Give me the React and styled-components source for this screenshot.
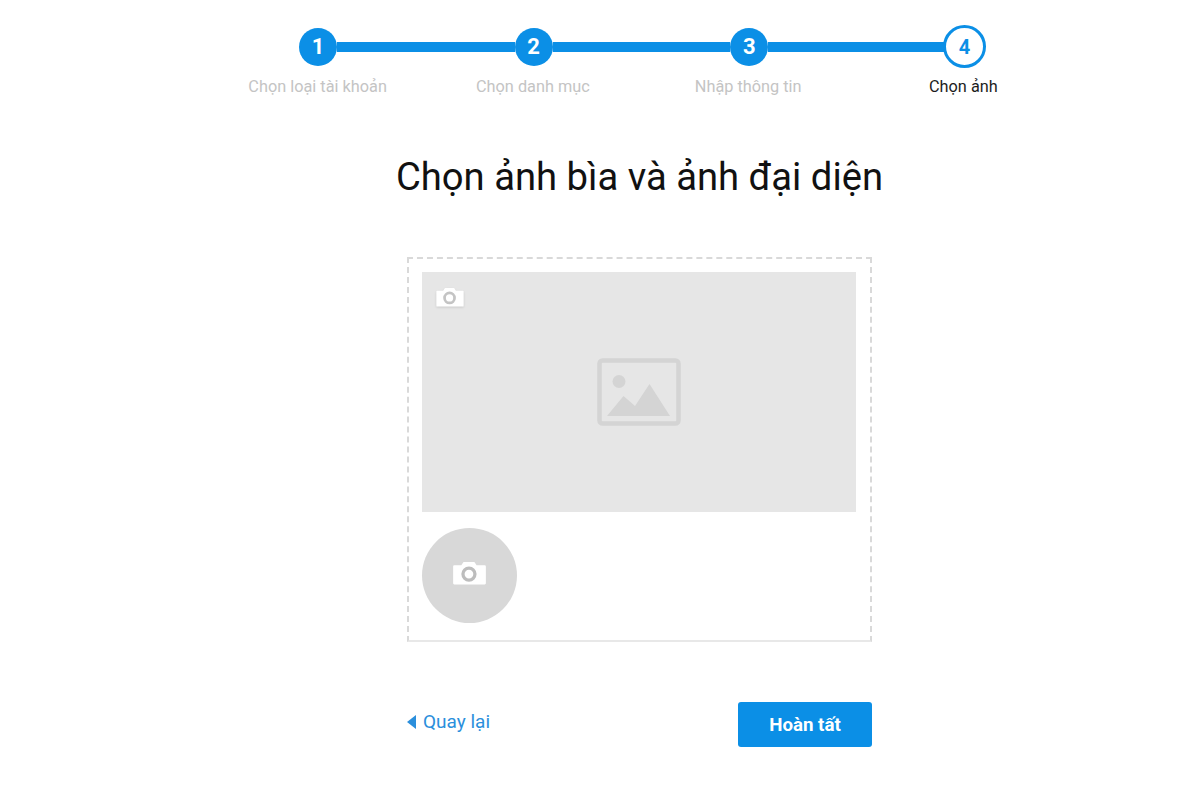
import React from 'react';
import styled, { createGlobalStyle } from 'styled-components';

const GlobalStyle = createGlobalStyle`
  html, body {
    margin: 0;
    padding: 0;
    background: #fff;
    font-family: Roboto, "Liberation Sans", sans-serif;
  }
`;

const steps = [
  { label: 'Chọn loại tài khoản' },
  { label: 'Chọn danh mục' },
  { label: 'Nhập thông tin' },
  { label: 'Chọn ảnh', current: true },
];

const CameraIcon = ({ width, height, lens }) => (
  <svg width={width} height={height} viewBox="0 0 30 22">
    <path
      d="M1 4h6.500L9.500 1h10l2 3H29a1 1 0 0 1 1 1V20.500a1 1 0 0 1-1 1H1a1 1 0 0 1-1-1V5a1 1 0 0 1 1-1z"
      fill="#fff"
    />
    <circle cx="14.500" cy="12" r="5.500" fill="none" stroke={lens} strokeWidth="3" />
  </svg>
);

const PictureIcon = () => (
  <svg width="84" height="68" viewBox="0 0 84 68">
    <rect x="2.500" y="2.500" width="79" height="63" rx="3" fill="none" stroke="#d4d4d4" strokeWidth="4.500" />
    <circle cx="22" cy="23.500" r="6.500" fill="#d4d4d4" />
    <path d="M10 58 L26.500 38 L38 48 L52.500 26 L73 58 Z" fill="#d4d4d4" />
  </svg>
);

export default function App() {
  return (
    <Page>
      <GlobalStyle />
      <Stepper>
        <Track>
          {steps.map((step, i) => (
            <React.Fragment key={step.label}>
              {step.current ? <CurrentDot>{i + 1}</CurrentDot> : <Dot>{i + 1}</Dot>}
              {i < steps.length - 1 && <Line />}
            </React.Fragment>
          ))}
        </Track>
        <Labels>
          {steps.map((step) => (
            <Label key={step.label} $current={step.current}>
              {step.label}
            </Label>
          ))}
        </Labels>
      </Stepper>

      <Main>
        <Title>Chọn ảnh bìa và ảnh đại diện</Title>

        <UploadCard>
          <Cover>
            <CoverCamera>
              <CameraIcon width={28} height={20} lens="#c4c4c4" />
            </CoverCamera>
            <PictureIcon />
          </Cover>
          <AvatarRow>
            <Avatar>
              <CameraIcon width={33} height={24} lens="#bdbdbd" />
            </Avatar>
          </AvatarRow>
        </UploadCard>

        <Actions>
          <BackLink href="#">
            <BackArrow />
            Quay lại
          </BackLink>
          <DoneButton type="button">Hoàn tất</DoneButton>
        </Actions>
      </Main>
    </Page>
  );
}

const Page = styled.div`
  box-sizing: border-box;
  width: 1200px;
  height: 800px;
  padding: 25px 0 0 81px;
  display: flex;
  flex-direction: column;
  align-items: center;
  overflow: hidden;
`;

const Stepper = styled.div`
  width: 861px;
  display: flex;
  flex-direction: column;
`;

const Track = styled.div`
  display: flex;
  align-items: center;
  margin: 0 85px 0 89px;
  height: 43px;
`;

const Dot = styled.div`
  flex: none;
  position: relative;
  width: 38px;
  height: 38px;
  border-radius: 50%;
  background: #0b8fe6;
  color: #fff;
  font-size: 22px;
  font-weight: 700;
  display: flex;
  align-items: center;
  justify-content: center;
`;

const CurrentDot = styled(Dot)`
  box-sizing: border-box;
  width: 43px;
  height: 43px;
  margin-left: -3px;
  background: #fff;
  border: 3px solid #0b8fe6;
  color: #0b8fe6;
  font-size: 20px;
`;

const Line = styled.div`
  flex: 1;
  height: 10px;
  background: #0b8fe6;
`;

const Labels = styled.div`
  display: grid;
  grid-template-columns: repeat(4, 1fr);
  margin-top: 9px;
`;

const Label = styled.div`
  text-align: center;
  font-size: 16.300px;
  line-height: 20px;
  color: ${({ $current }) => ($current ? '#1c1c1c' : '#c4c4c4')};
`;

const Main = styled.div`
  margin-right: 2px;
  display: flex;
  flex-direction: column;
  align-items: center;
`;

const Title = styled.h1`
  margin: 58px 0 0;
  font-size: 38.200px;
  line-height: 44px;
  font-weight: 400;
  color: #111;
`;

const UploadCard = styled.div`
  box-sizing: border-box;
  width: 465px;
  height: 385px;
  margin-top: 58px;
  padding: 13px 14px 0 13px;
  border: 2px dashed #d9d9d9;
  border-bottom: 2px solid #e8e8e8;
  display: flex;
  flex-direction: column;
`;

const Cover = styled.div`
  position: relative;
  height: 240px;
  background: #e6e6e6;
  display: flex;
  align-items: center;
  justify-content: center;
`;

const CoverCamera = styled.div`
  position: absolute;
  top: 15px;
  left: 14px;
  display: flex;
  filter: drop-shadow(0 1px 1px rgba(0, 0, 0, 0.12));
`;

const AvatarRow = styled.div`
  margin-top: 16px;
  display: flex;
`;

const Avatar = styled.div`
  box-sizing: border-box;
  width: 95px;
  height: 95px;
  padding-bottom: 6px;
  border-radius: 50%;
  background: #d8d8d8;
  display: flex;
  align-items: center;
  justify-content: center;
`;

const Actions = styled.div`
  width: 465px;
  margin-top: 60px;
  display: flex;
  align-items: center;
  justify-content: space-between;
`;

const BackLink = styled.a`
  display: flex;
  align-items: center;
  gap: 7px;
  font-size: 19px;
  line-height: 24px;
  color: #2b8fdc;
  text-decoration: none;
  margin-bottom: 5px;
`;

const BackArrow = styled.span`
  width: 0;
  height: 0;
  border-top: 7px solid transparent;
  border-bottom: 7px solid transparent;
  border-right: 9px solid #2b8fdc;
`;

const DoneButton = styled.button`
  width: 134px;
  height: 45px;
  border: none;
  border-radius: 3px;
  background: #0b8fe6;
  color: #fff;
  font-family: inherit;
  font-size: 18.700px;
  font-weight: 700;
  padding: 0;
`;
